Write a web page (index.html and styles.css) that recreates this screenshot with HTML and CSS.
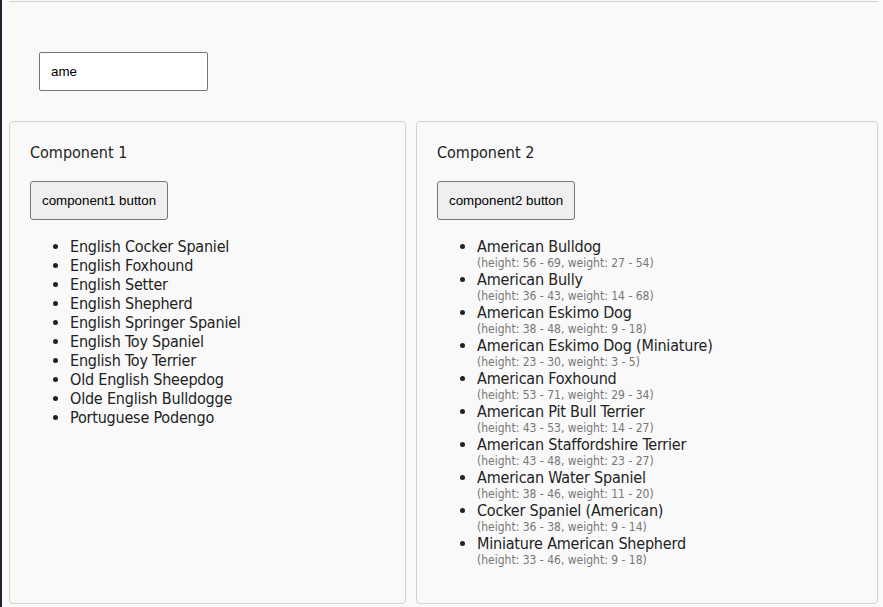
FILE: index.html
```html
<!DOCTYPE html>
<html>
<head>
<meta charset="utf-8">
<link rel="stylesheet" href="styles.css">
</head>
<body>
<div class="page">
  <div class="topline"></div>
  <div class="search-row">
    <input class="search" type="text" value="ame">
  </div>
  <div class="cards">
    <section class="card">
      <h2 class="card-title">Component 1</h2>
      <button class="btn">component1 button</button>
      <ul class="list">
        <li>English Cocker Spaniel</li>
        <li>English Foxhound</li>
        <li>English Setter</li>
        <li>English Shepherd</li>
        <li>English Springer Spaniel</li>
        <li>English Toy Spaniel</li>
        <li>English Toy Terrier</li>
        <li>Old English Sheepdog</li>
        <li>Olde English Bulldogge</li>
        <li>Portuguese Podengo</li>
      </ul>
    </section>
    <section class="card">
      <h2 class="card-title">Component 2</h2>
      <button class="btn">component2 button</button>
      <ul class="list detail">
        <li>American Bulldog<span class="meta">(height: 56 - 69, weight: 27 - 54)</span></li>
        <li>American Bully<span class="meta">(height: 36 - 43, weight: 14 - 68)</span></li>
        <li>American Eskimo Dog<span class="meta">(height: 38 - 48, weight: 9 - 18)</span></li>
        <li>American Eskimo Dog (Miniature)<span class="meta">(height: 23 - 30, weight: 3 - 5)</span></li>
        <li>American Foxhound<span class="meta">(height: 53 - 71, weight: 29 - 34)</span></li>
        <li>American Pit Bull Terrier<span class="meta">(height: 43 - 53, weight: 14 - 27)</span></li>
        <li>American Staffordshire Terrier<span class="meta">(height: 43 - 48, weight: 23 - 27)</span></li>
        <li>American Water Spaniel<span class="meta">(height: 38 - 46, weight: 11 - 20)</span></li>
        <li>Cocker Spaniel (American)<span class="meta">(height: 36 - 38, weight: 9 - 14)</span></li>
        <li>Miniature American Shepherd<span class="meta">(height: 33 - 46, weight: 9 - 18)</span></li>
      </ul>
    </section>
  </div>
</div>
</body>
</html>
```
FILE: styles.css
```css
html, body {
  margin: 0;
  padding: 0;
  height: 100%;
}
body {
  background: #f9f9f9;
  border-left: 2px solid #1d2330;
  box-sizing: border-box;
  font-family: "DejaVu Sans Condensed", "DejaVu Sans", Verdana, sans-serif;
  font-stretch: condensed;
  color: #222;
  overflow: hidden;
}
.page {
  padding: 1px 5px 0 7px;
  height: 100%;
  box-sizing: border-box;
  display: flex;
  flex-direction: column;
}
.topline {
  height: 1px;
  background: #d2d2d2;
  flex-shrink: 0;
}
.search-row {
  padding: 50px 0 0 30px;
  height: 119px;
  box-sizing: border-box;
  flex-shrink: 0;
}
.search {
  width: 169px;
  height: 39px;
  box-sizing: border-box;
  border: 1px solid #767676;
  border-radius: 2px;
  background: #fff;
  padding: 0 11px;
  font-family: "Liberation Sans", Arial, sans-serif;
  font-size: 13.333px;
  color: #000;
  outline: none;
  margin: 0;
}
.cards {
  display: grid;
  grid-template-columns: 397fr 462fr;
  gap: 10px;
  flex: 1;
  padding-bottom: 3px;
  min-height: 0;
}
.card {
  border: 1px solid #d4d4d4;
  border-radius: 4px;
  padding: 20px 20px 20px;
  min-width: 0;
}
.card-title {
  margin: 0 0 18px 0;
  font-size: 16px;
  font-weight: normal;
  line-height: 21px;
  color: #222;
}
.btn {
  height: 39px;
  padding: 0 11px;
  border: 1px solid #767676;
  border-radius: 3px;
  background: #efefef;
  font-family: "Liberation Sans", Arial, sans-serif;
  font-size: 13.333px;
  color: #000;
  margin: 0;
}
.list {
  margin: 17px 0 0 0;
  padding-left: 40px;
  font-size: 16px;
  line-height: 19px;
  letter-spacing: -0.2px;
  color: #222;
}
.meta {
  display: block;
  font-size: 12px;
  line-height: 14px;
  letter-spacing: 0;
  color: #777;
}
```
